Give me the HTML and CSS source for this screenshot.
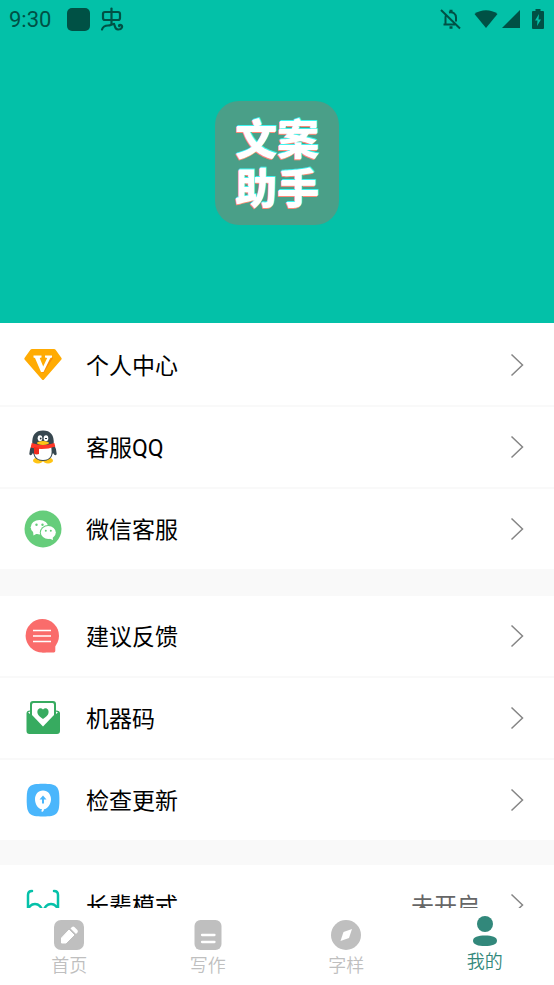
FILE: index.html
```html
<!DOCTYPE html>
<html lang="zh-CN">
<head>
<meta charset="utf-8">
<meta name="viewport" content="width=device-width, initial-scale=1">
<title>我的</title>
<link rel="stylesheet" href="styles.css">
</head>
<body>
<div class="app">
  <main class="content">
    <header class="hero">
      <div class="status">
        <div class="status-side">
          <time class="clock">9:30</time>
          <span class="notice"></span>
          <svg class="bug" width="24" height="24" viewBox="0 0 24 24" fill="none" stroke="#005145" stroke-width="2.2" stroke-linecap="round" stroke-linejoin="round" aria-hidden="true"><path d="M11.500 1.500V17"/><rect x="3" y="5" width="17" height="8" rx="2"/><path d="M2 22.500C3 19.500 5 18.500 8 18.500C11 18.500 11.500 17 14 17"/><path d="M14 17C15.500 19.500 14.500 22 18 22.500C22 22.700 23 19 21 18C19.500 17.500 18.500 18.300 19.300 19.200"/></svg>
        </div>
        <div class="status-side icons">
          <svg width="22" height="22" viewBox="0 0 22 22" fill="none" stroke="#005145" stroke-width="2" aria-hidden="true"><path d="M2 2L21 20.500M6.500 16V9.500C6.500 8 7 7 7.500 6.300M10 4.500C14 3.500 17 6 17 9.500V13.500M4.500 16.500H16"/><path d="M10.500 3h3M10.500 19.500h3" stroke-width="2.600"/></svg>
          <svg class="wifi" width="24" height="19" viewBox="0 0 24 19" fill="#005145" aria-hidden="true"><path d="M.5 4C7-1 17-1 23.500 4L12 18Z"/></svg>
          <svg class="signal" width="18" height="18" viewBox="0 0 18 18" fill="#005145" aria-hidden="true"><path d="M18 0V18H0Z"/></svg>
          <svg class="battery" width="12" height="20" viewBox="0 0 12 20" aria-hidden="true"><path d="M3.500 0h5v2H11q1 0 1 1v16q0 1-1 1H1q-1 0-1-1V3q0-1 1-1h2.500Z" fill="#005145"/><path d="M7 5L3 11.500h2.500L5 17l4-6.500H6.500Z" fill="#03c1a8"/></svg>
        </div>
      </div>
      <div class="logo"><span>文案</span><span>助手</span></div>
    </header>

    <section class="group first">
      <a class="row" href="#profile">
        <svg class="icon" width="38" height="38" viewBox="0 0 38 38" aria-hidden="true"><path d="M8 3h22q1 0 1.600.8l5.700 8q.8 1-.1 2L20 33.500q-1 1-2 0L.8 13.800q-.9-1-.1-2l5.700-8Q7 3 8 3Z" fill="#ffab03"/><path d="M28 11l1 1-9.500 15-2-1Z" fill="#f58a0a"/><path d="M9.500 9.500h8v2l-1.800.5 3.500 8.500 4-8.500-2.200-.5v-2h7v2l-1.700.5-6.800 14H17l-6-14-1.500-.5Z" fill="#fff"/></svg>
        <span class="label">个人中心</span>
        <svg class="arrow" width="14" height="24" viewBox="0 0 14 24" aria-hidden="true"><path d="M1.500 1.500L12.500 12L1.500 22.500"/></svg>
      </a>
      <a class="row" href="#qq">
        <svg class="icon" width="38" height="38" viewBox="0 0 38 38" aria-hidden="true"><ellipse cx="14" cy="32.500" rx="5" ry="3" fill="#ffc414"/><ellipse cx="24" cy="32.500" rx="5" ry="3" fill="#ffc414"/><path d="M8.300 16Q7.500 2.500 19 2.500T29.700 16Q32.700 21 32.700 26Q31.500 29 29 25Q27 33 19 33T9 25Q6.500 29 5.300 26Q5.300 21 8.300 16Z" fill="#37474f"/><path d="M11 18h16q3 14-8 14T11 18Z" fill="#fff"/><path d="M7.700 15q11.300 4 22.600 0l1 3.500q-12 4.500-24.600 1Z" fill="#ff3726"/><path d="M10 19l5 1v6q-3 1-5-.5Z" fill="#f02a1c"/><ellipse cx="16" cy="10.300" rx="2.300" ry="3" fill="#fff"/><ellipse cx="22" cy="10.300" rx="2.300" ry="3" fill="#fff"/><circle cx="16.700" cy="10.500" r=".9" fill="#26343b"/><path d="M21 11q1-2 2 0" fill="none" stroke="#26343b"/><ellipse cx="19" cy="15" rx="6" ry="1.900" fill="#ffc414"/></svg>
        <span class="label">客服QQ</span>
        <svg class="arrow" width="14" height="24" viewBox="0 0 14 24" aria-hidden="true"><path d="M1.500 1.500L12.500 12L1.500 22.500"/></svg>
      </a>
      <a class="row" href="#wechat">
        <svg class="icon" width="38" height="38" viewBox="0 0 38 38" aria-hidden="true"><circle cx="19" cy="19" r="18.500" fill="#66cd7b"/><path d="M9 21L9.500 25.500L14 23Z" fill="#fff"/><ellipse cx="15.500" cy="17.200" rx="8.800" ry="7.300" fill="#fff"/><ellipse cx="24.300" cy="22.500" rx="8.500" ry="7.500" fill="#66cd7b"/><ellipse cx="24.300" cy="22.500" rx="7.500" ry="6.500" fill="#fff"/><path d="M24 28l5 2-.5-4Z" fill="#fff"/><g fill="#66cd7b"><circle cx="12.500" cy="14.800" r="1.200"/><circle cx="18.500" cy="14.800" r="1.200"/><circle cx="21.800" cy="20.800" r="1"/><circle cx="26.800" cy="20.800" r="1"/></g></svg>
        <span class="label">微信客服</span>
        <svg class="arrow" width="14" height="24" viewBox="0 0 14 24" aria-hidden="true"><path d="M1.500 1.500L12.500 12L1.500 22.500"/></svg>
      </a>
    </section>

    <section class="group">
      <a class="row" href="#feedback">
        <svg class="icon" width="38" height="38" viewBox="0 0 38 38" aria-hidden="true"><circle cx="18.300" cy="18.700" r="16.700" fill="#fa6c6b"/><path d="M18.300 20H33L31.300 28v6q0 1.400-1.400 1.400H18.300Z" fill="#fa6c6b"/><path d="M9 13.500h18M9 19h18M9 24.500h18" stroke="#fff" stroke-width="1.500"/></svg>
        <span class="label">建议反馈</span>
        <svg class="arrow" width="14" height="24" viewBox="0 0 14 24" aria-hidden="true"><path d="M1.500 1.500L12.500 12L1.500 22.500"/></svg>
      </a>
      <a class="row" href="#code">
        <svg class="icon" width="38" height="38" viewBox="0 0 38 38" aria-hidden="true"><path d="M6 11.500V5q0-3 3-3h20q3 0 3 3v6.500q4 0 4 3V32q0 3-3 3H5.500q-3 0-3-3V14.500q0-3 3.500-3Z" fill="#37ab60"/><path d="M8 5.500Q8 4 9.500 4h19Q30 4 30 5.500V16L19 27.500L8 16Z" fill="#fff"/><path d="M4 13.500l2-1v2.500ZM34 13.500l-2-1v2.500Z" fill="#fff"/><path d="M19 10.500C16.500 7.500 12 10 13.800 15Q14.500 17 19 20Q23.500 17 24.200 15C26 10 21.500 7.500 19 10.500Z" fill="#37ab60"/></svg>
        <span class="label">机器码</span>
        <svg class="arrow" width="14" height="24" viewBox="0 0 14 24" aria-hidden="true"><path d="M1.500 1.500L12.500 12L1.500 22.500"/></svg>
      </a>
      <a class="row" href="#update">
        <svg class="icon" width="38" height="38" viewBox="0 0 38 38" aria-hidden="true"><path d="M19 2.700C33 2.700 35.400 5 35.400 19S33 35.500 19 35.500S2.700 33 2.700 19S5 2.700 19 2.700Z" fill="#4ab6fc"/><path d="M19 9.500c5 0 8 4 8 8.800 0 5-3.500 9.500-7 10q0 2.200-2 2.700l-.8-1.200q1-.3.800-1.500c-4-.5-7-5-7-10 0-4.800 3-8.800 8-8.800Z" fill="#fff"/><path d="M19 22.500V17" stroke="#4ab6fc" stroke-width="2"/><path d="M19 14.500l3.500 4h-7Z" fill="#4ab6fc"/></svg>
        <span class="label">检查更新</span>
        <svg class="arrow" width="14" height="24" viewBox="0 0 14 24" aria-hidden="true"><path d="M1.500 1.500L12.500 12L1.500 22.500"/></svg>
      </a>
    </section>

    <section class="group">
      <a class="row" href="#senior">
        <svg class="icon" width="38" height="38" viewBox="0 0 38 38" fill="none" stroke="#05c1a9" stroke-width="2.500" stroke-linecap="round" aria-hidden="true"><path d="M8 5Q4 5 4 9V24M30 5q4 0 4 4V24"/><circle cx="11" cy="25" r="7"/><circle cx="27" cy="25" r="7"/><path d="M18 24h2"/></svg>
        <span class="label">长辈模式</span>
        <span class="value">未开启</span>
        <svg class="arrow" width="14" height="24" viewBox="0 0 14 24" aria-hidden="true"><path d="M1.500 1.500L12.500 12L1.500 22.500"/></svg>
      </a>
    </section>
  </main>

  <nav class="tabs">
    <a class="tab" href="#home">
      <svg width="30" height="30" viewBox="0 0 30 30" aria-hidden="true"><rect width="30" height="30" rx="7" fill="#bfbfbf"/><path d="M7.500 23v-5L15 10l5 5-8 8Z" fill="#fff" stroke="#fff" stroke-linejoin="round"/><path d="M16.500 8.500l1.500-1.500q1.200-1 2.400 0l3 3q1 1.200 0 2.400L22 14Z" fill="#fff"/></svg>
      <span>首页</span>
    </a>
    <a class="tab" href="#write">
      <svg width="30" height="30" viewBox="0 0 30 30" aria-hidden="true"><rect x="1.500" width="27" height="30" rx="6" fill="#bfbfbf"/><path d="M9 15h12.500M9 22h12.500" stroke="#fff" stroke-width="2.300" stroke-linecap="round"/></svg>
      <span>写作</span>
    </a>
    <a class="tab" href="#fonts">
      <svg width="30" height="30" viewBox="0 0 30 30" aria-hidden="true"><circle cx="15" cy="15" r="15" fill="#bfbfbf"/><path d="M21 9L18 18L9.500 21L12.500 12Z" fill="#fff"/></svg>
      <span>字样</span>
    </a>
    <a class="tab active" href="#me" aria-current="page">
      <svg width="30" height="30" viewBox="0 0 30 30" fill="#32887b" aria-hidden="true"><circle cx="15" cy="8" r="8"/><path d="M15 19.500C22 19.500 27 21 27 24.700S22 30 15 30S3 28.500 3 24.700S8 19.500 15 19.500Z"/></svg>
      <span>我的</span>
    </a>
  </nav>
</div>
</body>
</html>
```
FILE: styles.css
```css
* {
  box-sizing: border-box;
}

body {
  margin: 0;
  font-family: Roboto, "Noto Sans CJK SC", sans-serif;
  color: #000;
  background: #fff;
}

svg {
  display: block;
  flex: none;
}

a {
  color: inherit;
  text-decoration: none;
}

.app {
  display: flex;
  flex-direction: column;
  height: 100vh;
}

.content {
  flex: 1;
  min-height: 0;
  overflow-y: auto;
  scrollbar-width: none;
  background: #f9f9f9;
}

.hero {
  display: flex;
  flex-direction: column;
  align-items: center;
  padding-bottom: 98px;
  background: #03c1a8;
}

.status {
  display: flex;
  justify-content: space-between;
  align-self: stretch;
  height: 38px;
  padding: 0 10px 0 9px;
  color: #005145;
}

.status-side {
  display: flex;
  align-items: center;
}

.clock {
  font-size: 22px;
}

.notice {
  width: 23px;
  height: 23px;
  margin: 0 10px 0 16px;
  border-radius: 5px;
  background: #005145;
}

.wifi {
  margin-left: 13px;
}

.signal {
  margin-left: 4px;
}

.battery {
  margin-left: 12px;
}

.logo {
  display: flex;
  flex-direction: column;
  align-items: center;
  justify-content: center;
  width: 124px;
  height: 124px;
  margin-top: 63px;
  padding-bottom: 4px;
  border-radius: 24px;
  background: #4a9f88;
  color: #fff;
  font-family: "Noto Sans CJK SC", sans-serif;
  font-size: 42px;
  font-weight: 900;
  line-height: 49px;
  text-shadow: 1px -1px 0 #3ff5f0, -1px 1px 0 #ff8a78;
}

.group {
  margin-bottom: 25px;
  background: #fff;
}

.first {
  margin-bottom: 27px;
  padding-top: 2px;
}

.row {
  display: flex;
  align-items: center;
  height: 80px;
  padding: 0 30px 0 24px;
  font-size: 23px;
}

.row + .row {
  height: 82px;
  border-top: 2px solid #f9f9f9;
}

.label,
.value {
  padding-bottom: 2px;
}

.label {
  flex: 1;
  margin-left: 24px;
}

.value {
  margin-right: 30px;
  color: #666;
}

.arrow {
  fill: none;
  stroke: #858585;
  stroke-width: 1.5px;
}

.tabs {
  display: flex;
  height: 77px;
  background: #fff;
}

.tab {
  display: flex;
  flex: 1;
  flex-direction: column;
  align-items: center;
  gap: 3px;
  padding-top: 12px;
  color: #bfbfbf;
  font-size: 18px;
  font-weight: 350;
  line-height: 26px;
}

.active {
  padding-top: 8px;
  color: #32887b;
}
```
